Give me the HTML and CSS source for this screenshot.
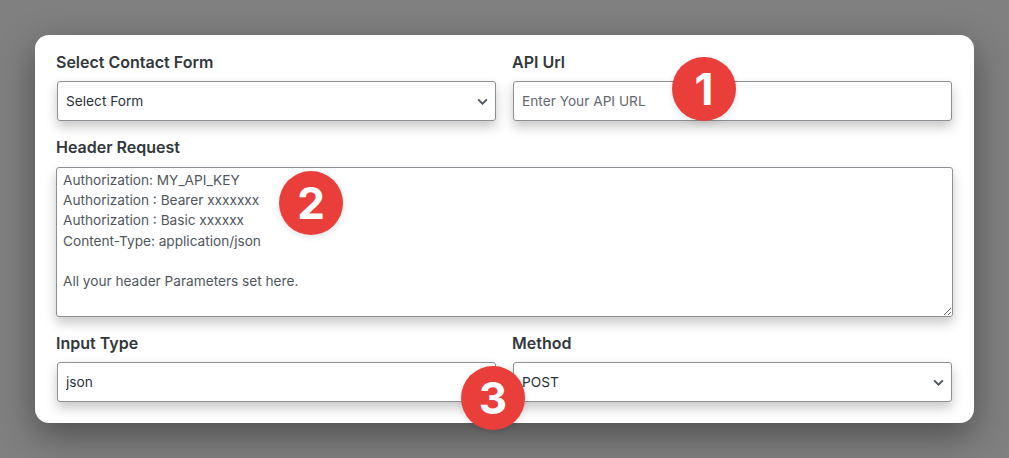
FILE: index.html
```html
<!DOCTYPE html>
<html>
  <head>
    <title>API Settings</title>
    <link rel="stylesheet" href="styles.css">
  </head>
  <body>
    <div class="card">
      <form class="settings-form">
        <div class="field">
          <label for="contact-form">Select Contact Form</label>
          <div class="select-wrap">
            <select id="contact-form">
              <option>Select Form</option>
            </select>
            <svg class="chevron" viewBox="0 0 12 8"><path d="M1 1.5l5 5 5-5"/></svg>
          </div>
        </div>
        <div class="field field-right">
          <label for="api-url">API Url</label>
          <input type="text" id="api-url" placeholder="Enter Your API URL">
        </div>
        <div class="field field-wide">
          <label for="header-request">Header Request</label>
          <textarea id="header-request">Authorization: MY_API_KEY
Authorization : Bearer xxxxxxx
Authorization : Basic xxxxxx
Content-Type: application/json

All your header Parameters set here.</textarea>
        </div>
        <div class="field">
          <label for="input-type">Input Type</label>
          <input type="text" id="input-type" value="json">
        </div>
        <div class="field field-right">
          <label for="method">Method</label>
          <div class="select-wrap">
            <select id="method">
              <option>POST</option>
            </select>
            <svg class="chevron" viewBox="0 0 12 8"><path d="M1 1.5l5 5 5-5"/></svg>
          </div>
        </div>
      </form>
      <div class="badge badge-one">1</div>
      <div class="badge badge-two">2</div>
      <div class="badge badge-three">3</div>
    </div>
  </body>
</html>
```

FILE: styles.css
```css
* {
  box-sizing: border-box;
}

body {
  margin: 0;
  height: 458px;
  padding: 35px;
  overflow: hidden;
  background-color: #808080;
  font-family: "Inter", "Liberation Sans", sans-serif;
}

.card {
  position: relative;
  height: 388px;
  padding: 18px 21px 21px 22px;
  background-color: white;
  border-radius: 14px;
  box-shadow: 0 12px 36px rgba(0, 0, 0, 0.4);
}

.settings-form {
  display: grid;
  grid-template-columns: 439px 439px;
  column-gap: 17px;
  row-gap: 17px;
}

.field {
  min-width: 0;
}

.field-wide {
  grid-column: 1 / 3;
}

label {
  display: block;
  height: 20px;
  margin-bottom: 8px;
  margin-left: -1px;
  color: #32373c;
  font-size: 16px;
  font-weight: 600;
  line-height: 18px;
}

input[type="text"],
select,
textarea {
  display: block;
  width: 100%;
  background-color: white;
  border: 1px solid #8c8f94;
  border-radius: 3px;
  box-shadow: 0 6px 12px rgba(0, 0, 0, 0.22);
  color: #2c3338;
  font-family: inherit;
  font-size: 13.7px;
}

input[type="text"],
select {
  height: 40px;
  padding: 0 8px;
}

input::placeholder {
  color: #646970;
  opacity: 1;
}

select {
  appearance: none;
}

textarea {
  width: 897px;
  height: 150px;
  margin-top: 9px;
  margin-left: -1px;
  padding: 2px 6px;
  color: #50575e;
  font-size: 13.65px;
  line-height: 20.2px;
}

.select-wrap {
  position: relative;
}

.chevron {
  position: absolute;
  top: 17px;
  right: 8px;
  width: 11px;
  height: 7px;
  fill: none;
  stroke: #50575e;
  stroke-width: 2.2;
}

.badge {
  position: absolute;
  display: flex;
  align-items: center;
  justify-content: center;
  width: 64px;
  height: 64px;
  background-color: #ea3e3b;
  border-radius: 50%;
  box-shadow: 0 2px 6px rgba(0, 0, 0, 0.12);
  color: white;
  font-size: 44px;
  font-weight: 700;
}

.badge-one {
  top: 22px;
  left: 637px;
}

.badge-two {
  top: 136px;
  left: 244px;
}

.badge-three {
  top: 331px;
  left: 426px;
}
```
